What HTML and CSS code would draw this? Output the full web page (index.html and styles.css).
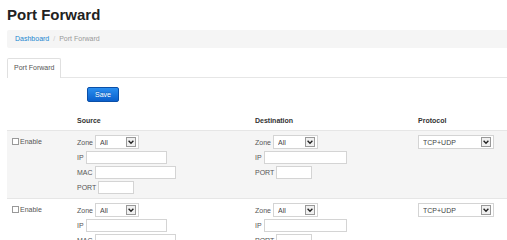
FILE: index.html
```html
<!DOCTYPE html>
<html>
<head>
<meta charset="utf-8">
<link rel="stylesheet" href="styles.css">
</head>
<body>
<div class="page">
  <h1 class="title">Port Forward</h1>
  <div class="crumbs"><a class="crumb-link">Dashboard</a><span class="crumb-sep">/</span><span class="crumb-cur">Port Forward</span></div>
  <div class="tabs"><div class="tab">Port Forward</div></div>
  <div class="actions"><button class="btn-save">Save</button></div>
  <div class="grid">
    <div class="hcell"></div>
    <div class="hcell">Source</div>
    <div class="hcell">Destination</div>
    <div class="hcell">Protocol</div>

    <div class="cell shade first"><label class="enable"><input type="checkbox" class="chk">Enable</label></div>
    <div class="cell shade">
      <div class="fline"><span class="lbl">Zone</span> <select class="sel w44"><option>All</option></select></div>
      <div class="fline"><span class="lbl">IP</span> <input class="inp w81"></div>
      <div class="fline"><span class="lbl">MAC</span> <input class="inp w81"></div>
      <div class="fline"><span class="lbl">PORT</span> <input class="inp w36"></div>
    </div>
    <div class="cell shade">
      <div class="fline"><span class="lbl">Zone</span> <select class="sel w45"><option>All</option></select></div>
      <div class="fline"><span class="lbl">IP</span> <input class="inp w83"></div>
      <div class="fline"><span class="lbl">PORT</span> <input class="inp w36"></div>
    </div>
    <div class="cell shade">
      <div class="fline"><select class="sel w76"><option>TCP+UDP</option></select></div>
    </div>

    <div class="cell first"><label class="enable"><input type="checkbox" class="chk">Enable</label></div>
    <div class="cell">
      <div class="fline"><span class="lbl">Zone</span> <select class="sel w44"><option>All</option></select></div>
      <div class="fline"><span class="lbl">IP</span> <input class="inp w81"></div>
      <div class="fline"><span class="lbl">MAC</span> <input class="inp w81"></div>
      <div class="fline"><span class="lbl">PORT</span> <input class="inp w36"></div>
    </div>
    <div class="cell">
      <div class="fline"><span class="lbl">Zone</span> <select class="sel w45"><option>All</option></select></div>
      <div class="fline"><span class="lbl">IP</span> <input class="inp w83"></div>
      <div class="fline"><span class="lbl">PORT</span> <input class="inp w36"></div>
    </div>
    <div class="cell">
      <div class="fline"><select class="sel w76"><option>TCP+UDP</option></select></div>
    </div>
  </div>
</div>
</body>
</html>
```
FILE: styles.css
```css
html, body {
  margin: 0;
  padding: 0;
  background: #fff;
  font-family: "Liberation Sans", Arial, sans-serif;
  color: #333;
  overflow: hidden;
}
.page {
  padding-left: 7px;
}
.title {
  margin: 0;
  padding-top: 6px;
  font-size: 15px;
  line-height: 18px;
  font-weight: bold;
  color: #222;
}
.crumbs {
  margin-top: 6px;
  height: 18px;
  line-height: 18px;
  background: #f5f5f5;
  padding-left: 8px;
  font-size: 7px;
  border-radius: 2px 0 0 2px;
}
.crumb-link {
  color: #1a86d0;
}
.crumb-sep {
  color: #ccc;
  padding: 0 4px;
}
.crumb-cur {
  color: #999;
}
.tabs {
  margin-top: 10px;
  height: 19px;
  border-bottom: 1px solid #e6e6e6;
  display: flex;
}
.tab {
  height: 19px;
  line-height: 18px;
  padding: 0 6px;
  font-size: 7px;
  color: #555;
  border: 1px solid #e0e0e0;
  border-bottom: none;
  border-radius: 2px 2px 0 0;
  background: #fff;
  margin-bottom: -1px;
}
.actions {
  padding: 9px 0 0 80px;
  height: 15px;
}
.btn-save {
  display: block;
  width: 32px;
  height: 15px;
  padding: 0;
  margin: 0;
  font-family: "Liberation Sans", Arial, sans-serif;
  font-size: 7px;
  color: #fff;
  border: 1px solid #0a4fa8;
  border-radius: 2px;
  background: linear-gradient(#2a8ef0, #0a60cc);
  text-shadow: 0 -1px 0 rgba(0,0,0,0.2);
}
.grid {
  margin-top: 10px;
  display: grid;
  grid-template-columns: 70px 178px 163px 1fr;
}
.hcell {
  height: 18px;
  line-height: 18px;
  font-size: 7px;
  font-weight: bold;
  color: #333;
}
.cell {
  border-top: 1px solid #e6e6e6;
  padding: 4px 0 4px 0;
  font-size: 7px;
  color: #555;
}
.cell.shade {
  background: #f5f5f5;
}
.cell.first {
  padding-left: 5px;
}
.enable {
  display: flex;
  align-items: center;
  height: 12px;
  gap: 1px;
}
.chk {
  appearance: none;
  -webkit-appearance: none;
  width: 7px;
  height: 7px;
  margin: 0;
  border: 1px solid #999;
  background: #fff;
  box-sizing: border-box;
}
.fline {
  display: flex;
  align-items: center;
  gap: 2px;
  margin-bottom: 1px;
  height: 14px;
}
.fline:last-child {
  margin-bottom: 0;
}
.lbl {
  color: #555;
}
.inp {
  box-sizing: border-box;
  height: 13px;
  margin: 0;
  padding: 0 2px;
  border: 1px solid #d4d4d4;
  background: #fff;
  font-size: 7px;
}
.sel {
  appearance: none;
  -webkit-appearance: none;
  box-sizing: border-box;
  height: 14px;
  margin: 0;
  padding: 0 0 0 4px;
  border: 1px solid #d4d4d4;
  border-radius: 0;
  font-family: "Liberation Sans", Arial, sans-serif;
  font-size: 7px;
  color: #444;
  background: #fff url("data:image/svg+xml;utf8,<svg xmlns='http://www.w3.org/2000/svg' width='10' height='10' viewBox='0 0 10 10'><rect x='0.5' y='0.5' width='9' height='9' fill='%23f0f0f0' stroke='%23999'/><path d='M2.6 3.8 L5 6.2 L7.4 3.8' fill='none' stroke='%23222' stroke-width='1.4'/></svg>") no-repeat right 2px center;
}
.w44 { width: 44px; }
.w45 { width: 45px; }
.w76 { width: 76px; }
.w81 { width: 81px; }
.w83 { width: 83px; }
.w36 { width: 36px; }
```
